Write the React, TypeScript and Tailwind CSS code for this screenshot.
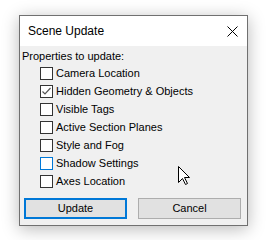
import { useState } from 'react';

const OPTIONS = [
  'Camera Location',
  'Hidden Geometry & Objects',
  'Visible Tags',
  'Active Section Planes',
  'Style and Fog',
  'Shadow Settings',
  'Axes Location',
];

export default function App() {
  const [checked, setChecked] = useState<Record<string, boolean>>({ 'Hidden Geometry & Objects': true });

  return (
    <div className="relative w-[268px] h-[240px] bg-white pt-[15px] pl-[19px] text-[11px] text-black"
      style={{ fontFamily: '"Liberation Sans", Arial, sans-serif' }}>

      {/* DIALOG */}
      <div className="w-[229px] h-[211px] flex flex-col bg-[#f0f0f0] border border-[#707070] shadow-[0_3px_16px_rgba(0,0,0,0.28)]">
        {/* Title bar */}
        <div className="h-[30px] flex items-center justify-between bg-white pl-[8px] pr-[9px] text-[12px]">
          <span>Scene Update</span>
          <svg width="11" height="11" viewBox="0 0 11 11" fill="none" stroke="#000" strokeWidth="1">
            <line x1="0.5" y1="0.5" x2="10.5" y2="10.5" />
            <line x1="10.5" y1="0.5" x2="0.5" y2="10.5" />
          </svg>
        </div>

        {/* Body */}
        <div className="flex flex-col pl-[2px] pt-[2px]">
          <div className="h-[16px] leading-[16px]">Properties to update:</div>
          {OPTIONS.map(o => {
            const on = !!checked[o];
            const hover = o === 'Shadow Settings';
            return (
              <label key={o} className="h-[18px] flex items-center gap-[3px] pl-[18px]">
                <button onClick={() => setChecked(p => ({ ...p, [o]: !p[o] }))}
                  className={`w-[13px] h-[13px] flex items-center justify-center bg-white border ${hover ? 'border-[#0078d7]' : 'border-[#333333]'}`}>
                  {on && (
                    <svg width="11" height="11" viewBox="0 0 11 11" fill="none" stroke="#555" strokeWidth="1.2">
                      <path d="M1.5 5.5 L4 8 L9.5 2" />
                    </svg>
                  )}
                </button>
                <span>{o}</span>
              </label>
            );
          })}
        </div>

        {/* Buttons */}
        <div className="flex gap-[11px] pl-[4px] mt-[8px]">
          <button className="w-[103px] h-[21px] bg-[#e1e1e1] border-2 border-[#0078d7] leading-none">Update</button>
          <button className="w-[103px] h-[21px] bg-[#e1e1e1] border border-[#adadad] leading-none">Cancel</button>
        </div>
      </div>

      {/* Mouse cursor */}
      <svg className="absolute left-[178px] top-[166px]" width="13" height="20" viewBox="0 0 13 20">
        <path d="M0.5 0.5 V16.5 L4.5 12.5 L7.5 18.5 L9.5 17.5 L6.5 11.5 H11.5 Z" fill="#fff" stroke="#000" strokeWidth="1" strokeLinejoin="miter" />
      </svg>
    </div>
  );
}
